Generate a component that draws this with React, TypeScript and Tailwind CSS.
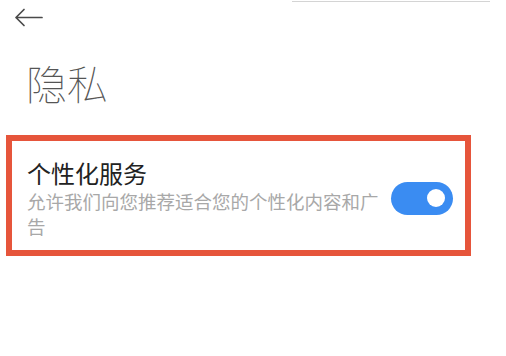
const cjk = { fontFamily: '"Noto Sans CJK SC", "Noto Sans", sans-serif' };

const BackArrow = () => (
  <svg width="30" height="20" viewBox="0 0 30 20" fill="none" className="block">
    <path
      d="M2 9.5 H28 M10 1.5 L2 9.5 L10 17.5"
      stroke="#4a4a4a"
      strokeWidth="1.7"
      strokeLinecap="round"
      strokeLinejoin="round"
    />
  </svg>
);

const Toggle = () => (
  <div className="w-[62px] h-[33px] shrink-0 rounded-full bg-[#3a8cf2] flex items-center justify-end pr-[8px]">
    <div className="w-[18px] h-[18px] rounded-full bg-white" />
  </div>
);

export default function App() {
  return (
    <div className="w-[506px] h-[356px] bg-white overflow-hidden" style={cjk}>
      <div className="flex justify-end pr-[16px] pt-px">
        <div className="w-[198px] h-px bg-[#d4d4d4]" />
      </div>
      <div className="pl-[14px] pt-[6px]">
        <BackArrow />
      </div>
      <h1 className="mt-[30px] pl-[26px] text-[41px] leading-[49px] font-thin text-[#555555]">
        隐私
      </h1>
      <div className="mt-[28px] ml-[6px] w-[465px] h-[121px] border-[6px] border-[#e6553b] flex items-center pl-[15px] pr-[12px] pt-[16px] pb-[11px]">
        <div className="flex-1 min-w-0 self-start">
          <p className="text-[24px] leading-[32px] text-[#222222]">个性化服务</p>
          <p className="text-[18.5px] leading-[25px] text-[#a8a8a8]">
            允许我们向您推荐适合您的个性化内容和广告
          </p>
        </div>
        <Toggle />
      </div>
    </div>
  );
}
